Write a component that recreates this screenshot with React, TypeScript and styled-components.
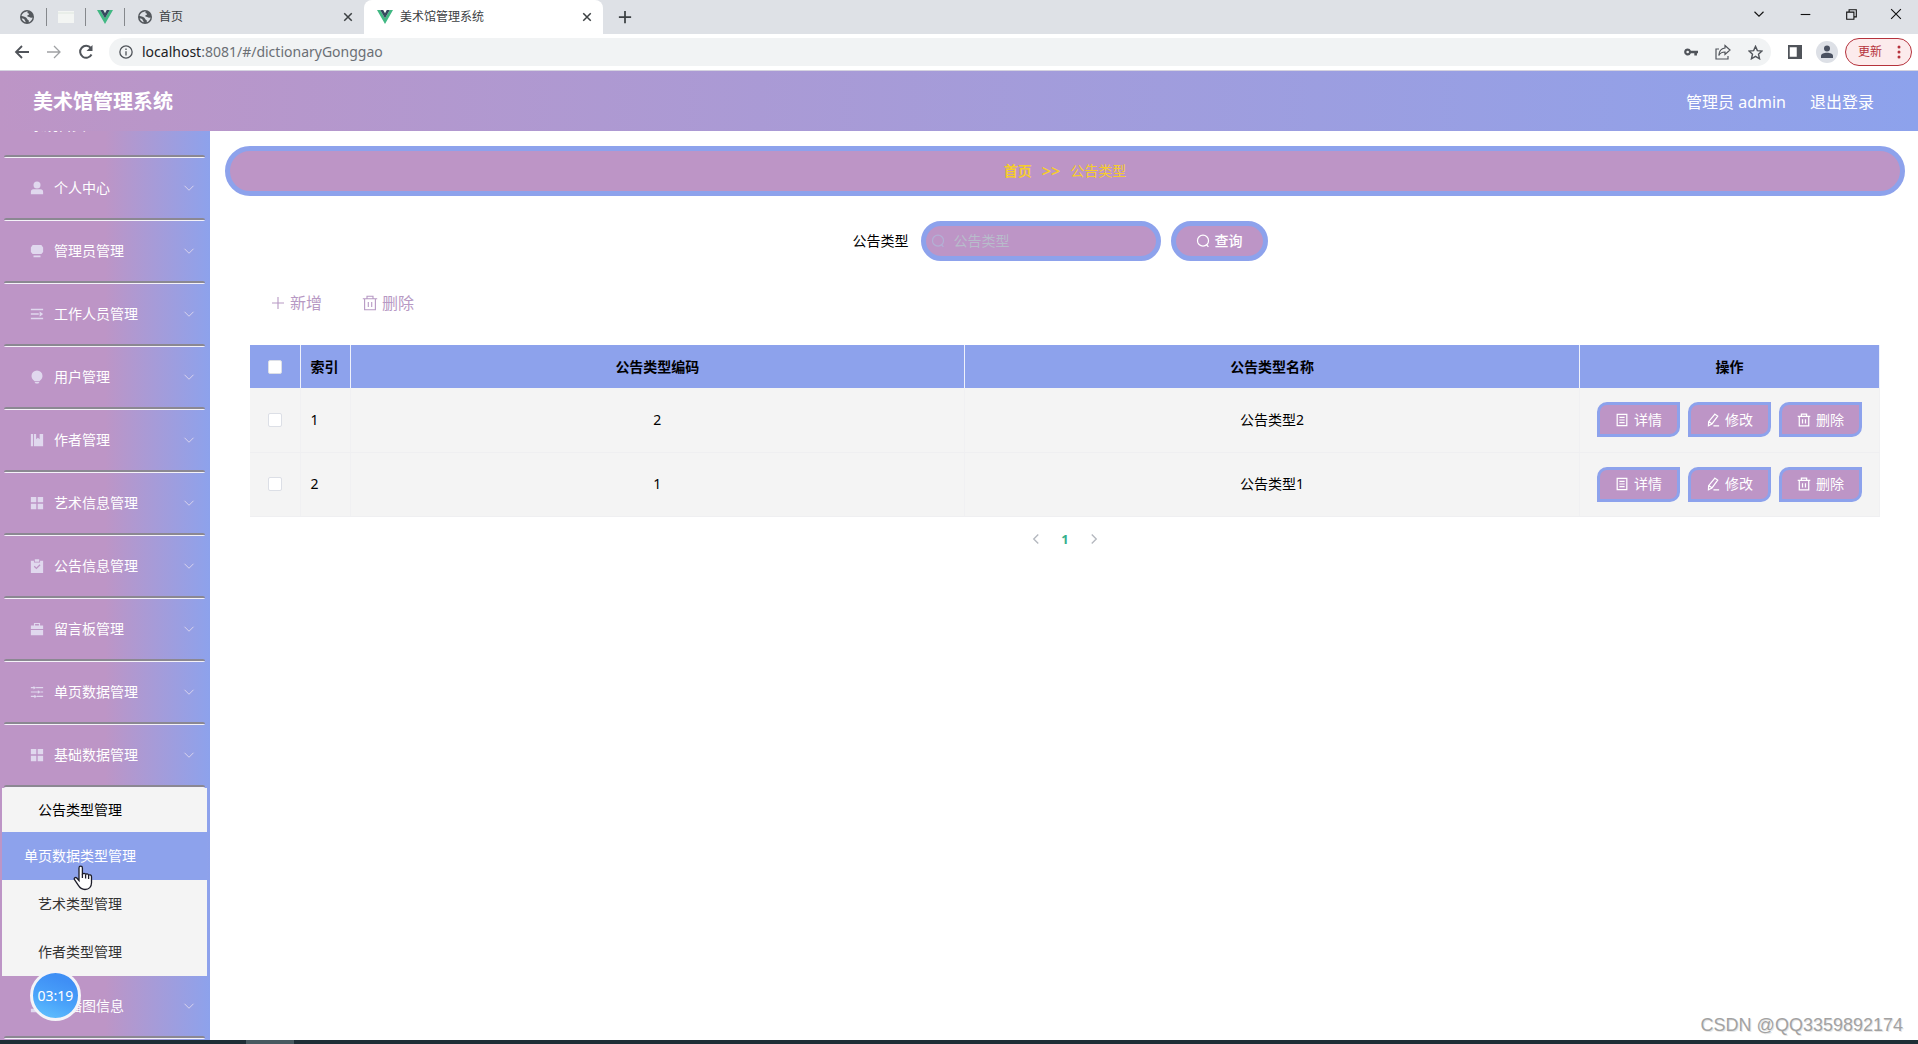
import React from 'react';
import styled, { createGlobalStyle, css } from 'styled-components';

const pink = '#bd95c6';
const blue = '#8da2ec';

const GlobalStyle = createGlobalStyle`
  * { box-sizing: border-box; }
  body {
    margin: 0;
    color: #000;
    background: #fff;
    font: 14px/20px "Noto Sans", "Noto Sans CJK SC", sans-serif;
  }
  button, input { font: inherit; }
  button { padding: 0; border: 0; background: none; color: inherit; cursor: pointer; }
  a { color: inherit; text-decoration: none; }
  svg { display: block; flex: none; }
`;

const Screen = styled.div`
  display: flex;
  flex-direction: column;
  height: 100vh;
  overflow: hidden;
`;

/* ---------- browser chrome ---------- */

const TabStrip = styled.div`
  display: flex;
  align-items: stretch;
  height: 34px;
  flex: none;
  background: #dee1e6;
  color: #3c4043;
  font-size: 12px;
`;

const PinnedTab = styled.button`
  width: 39px;
  margin: 8px 0;
  display: flex;
  align-items: center;
  justify-content: center;
  border-right: 1px solid #85888c;
  &:first-child { width: 47px; padding-left: 8px; }
`;

const Tab = styled.div<{ $active?: boolean }>`
  display: flex;
  align-items: center;
  gap: 7px;
  width: 239px;
  padding: 0 10px 0 13px;
  border-radius: 8px 8px 0 0;
  background: ${p => (p.$active ? '#fff' : 'transparent')};
`;

const TabTitle = styled.span`
  flex: 1;
  white-space: nowrap;
`;

const IconButton = styled.button<{ $width?: number }>`
  display: flex;
  align-items: center;
  justify-content: center;
  width: ${p => p.$width ?? 32}px;
`;

const WindowButtons = styled.div`
  display: flex;
  margin-left: auto;
  padding-bottom: 6px;
  color: #111;
`;

const Toolbar = styled.div`
  display: flex;
  align-items: center;
  height: 37px;
  flex: none;
  padding: 0 6px;
  border-bottom: 1px solid #d5d3e0;
  background: #fff;
  color: #50545a;
`;

const Omnibox = styled.div`
  display: flex;
  align-items: center;
  flex: 1;
  height: 28px;
  margin: 0 8px 0 7px;
  padding-left: 10px;
  border-radius: 14px;
  background: #f1f3f4;
`;

const Url = styled.div`
  flex: 1;
  margin-left: 9px;
  color: #6b6f74;
  white-space: nowrap;
  b { font-weight: 400; color: #202124; }
`;

const UpdateButton = styled.button`
  display: flex;
  align-items: center;
  justify-content: space-between;
  width: 67px;
  height: 28px;
  margin-left: 2px;
  padding: 0 10px 0 12px;
  border: 1px solid #b5323c;
  border-radius: 14px;
  background: #fcebec;
  color: #b5323c;
  font-size: 12px;
`;

/* ---------- application ---------- */

const Header = styled.header`
  display: flex;
  align-items: center;
  height: 60px;
  flex: none;
  padding: 2px 44px 0 33px;
  background: linear-gradient(90deg, ${pink}, ${blue});
  color: #fff;
  font-size: 16px;
`;

const Brand = styled.h1`
  flex: 1;
  margin: 0;
  font-size: 20px;
  font-weight: 700;
`;

const HeaderLink = styled.a`
  margin-left: 24px;
`;

const Body = styled.div`
  display: flex;
  flex: 1;
  min-height: 0;
`;

const Sidebar = styled.nav`
  display: flex;
  flex-direction: column;
  justify-content: flex-end;
  width: 210px;
  flex: none;
  padding: 0 3px 1px 2px;
  overflow: hidden;
  background: linear-gradient(90deg, ${pink} 50%, ${blue});
`;

const MenuItem = styled.button`
  display: flex;
  align-items: center;
  gap: 10px;
  height: 60px;
  flex: none;
  padding: 0 12px 0 28px;
  color: #fff;
  text-align: left;
  span { flex: 1; }
  svg { color: #e0d8ee; }
`;

const Divider = styled.div`
  height: 3px;
  flex: none;
  margin: 0 2px;
  border-radius: 3px / 2px;
  background: linear-gradient(#8b8892 2px, #f4f2f8 2px);
`;

const SubMenu = styled.div`
  display: flex;
  flex-direction: column;
  flex: none;
  background: #f4f4f4;
`;

const SubLink = styled.a<{ $state?: 'current' | 'hover' }>`
  display: flex;
  align-items: center;
  height: 48px;
  padding-left: 36px;
  color: #333;
  ${p => p.$state === 'current' && css`height: 44px; color: #000;`}
  ${p => p.$state === 'hover' && css`padding-left: 22px; background: ${blue}; color: #fff;`}
`;

const Main = styled.main`
  flex: 1;
  min-width: 0;
  padding: 15px 13px 15px 15px;
`;

const Breadcrumb = styled.nav`
  display: flex;
  align-items: center;
  justify-content: center;
  gap: 10px;
  height: 50px;
  border: 5px solid ${blue};
  border-radius: 25px;
  background: ${pink};
  color: #f5cd2c;
  a { font-weight: 700; }
`;

const Separator = styled.span`
  font-size: 16px;
  font-weight: 600;
`;

const Content = styled.section`
  padding: 25px;
`;

const SearchForm = styled.form`
  display: flex;
  align-items: center;
  justify-content: center;
  padding-right: 10px;
  label { margin-right: 12px; }
`;

const SearchBox = styled.div`
  display: flex;
  align-items: center;
  gap: 9px;
  width: 240px;
  height: 40px;
  padding: 0 5px;
  border: 5px solid ${blue};
  border-radius: 20px;
  background: ${pink};
  color: #b3b0d4;
  input {
    flex: 1;
    min-width: 0;
    padding: 0;
    border: 0;
    outline: 0;
    background: none;
    color: #fff;
  }
  input::placeholder { color: #b8bccb; opacity: 1; }
`;

const SearchButton = styled.button`
  display: flex;
  align-items: center;
  justify-content: center;
  gap: 5px;
  width: 97px;
  height: 40px;
  margin-left: 10px;
  border: 5px solid ${blue};
  border-radius: 20px;
  background: ${pink};
  color: #fff;
  font-weight: 500;
`;

const Actions = styled.div`
  display: flex;
  gap: 40px;
  padding: 30px 20px;
`;

const TextButton = styled.button`
  display: flex;
  align-items: center;
  gap: 4px;
  height: 24px;
  color: #b799c4;
  font-size: 16px;
`;

const Table = styled.table`
  width: 100%;
  table-layout: fixed;
  border-collapse: collapse;
  th, td { padding: 0; text-align: center; }
  th {
    height: 43px;
    border-right: 1px solid #eef1fb;
    background: ${blue};
    font-weight: 700;
  }
  td {
    height: 64px;
    border-right: 1px solid #f0f0f2;
    border-bottom: 1px solid #efeff1;
    background: #f4f4f4;
  }
  th:nth-child(2), td:nth-child(2) { padding-left: 10px; text-align: left; }
`;

const Col = styled.col<{ $width?: number }>`
  width: ${p => (p.$width ? `${p.$width}px` : 'auto')};
`;

const CheckBox = styled.input`
  appearance: none;
  display: block;
  width: 14px;
  height: 14px;
  margin: 0 auto;
  border: 1px solid #dcdfe6;
  border-radius: 2px;
  background: #fff;
`;

const RowActions = styled.div`
  display: flex;
  justify-content: center;
  gap: 8px;
`;

const RowButton = styled.button`
  display: flex;
  align-items: center;
  justify-content: center;
  gap: 5px;
  width: 83px;
  height: 35px;
  border: 3px solid ${blue};
  border-radius: 10px 0;
  background: ${pink};
  color: #fff;
`;

const Pagination = styled.nav`
  display: flex;
  justify-content: center;
  align-items: center;
  padding-top: 8px;
`;

const PageButton = styled.button<{ $current?: boolean }>`
  display: flex;
  align-items: center;
  justify-content: center;
  width: 29px;
  height: 28px;
  font-size: 13px;
  font-weight: 700;
  color: ${p => (p.$current ? '#35b08c' : '#b4b8bf')};
`;

/* ---------- overlays ---------- */

const Recorder = styled.div`
  position: absolute;
  left: 30px;
  bottom: 23px;
  display: flex;
  align-items: center;
  justify-content: center;
  width: 51px;
  height: 51px;
  border: 3px solid #f4f4f8;
  border-radius: 50%;
  background: linear-gradient(200deg, #3f8ff5 20%, #4aa3fa 60%, #62c4fd);
  color: #fff;
`;

const Cursor = styled.svg`
  position: absolute;
  left: 73px;
  top: 865px;
`;

const Watermark = styled.div`
  position: absolute;
  right: 15px;
  bottom: 8px;
  color: #a2a2a2;
  font: 18px/22px "Liberation Sans", Arial, sans-serif;
  text-shadow: 1px 1px 0 #e6e6e6;
`;

const Taskbar = styled.div`
  display: flex;
  height: 4px;
  flex: none;
  padding-left: 246px;
  background: #1e2d35;
`;

const TaskbarItem = styled.div`
  width: 48px;
  background: #485960;
`;

/* ---------- icons ---------- */

type IconProps = { size?: number; children: React.ReactNode; w?: number };

const Line = ({ size = 14, w = 1.2, children }: IconProps) => (
  <svg width={size} height={size} viewBox="0 0 16 16" fill="none" stroke="currentColor" strokeWidth={w} aria-hidden="true">
    {children}
  </svg>
);

const Solid = ({ size = 14, children }: IconProps) => (
  <svg width={size} height={size} viewBox="0 0 16 16" fill="currentColor" aria-hidden="true">
    {children}
  </svg>
);

const VueLogo = () => (
  <svg width="16" height="14" viewBox="0 0 16 14" aria-hidden="true">
    <path d="M0 0h3.2L8 8.3 12.8 0H16L8 14z" fill="#41b883" />
    <path d="M3.2 0h3L8 3.2 9.8 0h3L8 8.3z" fill="#35495e" />
  </svg>
);

const Globe = () => (
  <svg width="14" height="14" viewBox="0 0 16 16" aria-hidden="true">
    <circle cx="8" cy="8" r="8" fill="#54585d" />
    <path d="M9 1.6c-1 1-.5 2 .8 2.3 1 .2.6 1.6-.6 1.9-1.5.4-1 1.7.3 2 1.5.2 2 1.3 3.4 1.1l1.5-.3c-.3 2.3-1.9 4.6-4.2 5.5l-.3-2.5c-1.9-.5-1.6-2.2-3-3.1C5.5 7.6 3.600 7.300 1.700 6.600 2.400 4 5.500 1.400 9 1.600z" fill="#dee1e6" />
    <path d="M2 9.500l2.800.8c.2 1.500 1.500 1.600 1.700 3.700C4.200 13.500 2.500 11.800 2 9.500z" fill="#dee1e6" />
  </svg>
);

const Close = () => <Line size={12} w={2}><path d="M3 3l10 10M13 3L3 13" /></Line>;
const ChevronDown = () => <Line size={12}><path d="M2 5l6 6 6-6" /></Line>;
const SearchIcon = () => <Line w={1.4}><circle cx="8" cy="7.6" r="6.3" /><path d="M11.800 12l2.400 2.800" /></Line>;
const Trash = ({ size, tall }: { size?: number; tall?: boolean }) => (
  <Line size={size} w={tall ? 1.1 : 1.4}>
    <path d="M.8 3.800h14.400M5 3.500V1.300h6v2.200M2.600 4v10.800h10.800V4M6.300 7v5M9.700 7v5" />
  </Line>
);
const Plus = () => <Line size={16} w={1.1}><path d="M8 2v12M2 8h12" /></Line>;
const DocIcon = () => <Line w={1.4}><path d="M2.500 1.500h11v13h-11zM5 5h6M5 8h6M5 11h6" /></Line>;
const EditIcon = () => (
  <Line w={1.4}><path d="M10.200 1.300l3.200 2.200-6.600 9-4 2 .2-4.600zM3.500 10l3.200 2.300M8.500 14.700h6.500" /></Line>
);

const GridIcon = () => (
  <Solid><path d="M1 1h6.200v6.200H1zM8.800 1H15v6.200H8.800zM1 8.800h6.200V15H1zM8.800 8.800H15V15H8.800z" /></Solid>
);

const menu: { label: string; icon?: React.ReactNode }[] = [
  { label: '个人中心', icon: <Solid><circle cx="8" cy="4.500" r="4" /><path d="M1 15v-2.500a3 3 0 013-3h8a3 3 0 013 3V15z" /></Solid> },
  { label: '管理员管理', icon: <Solid><path d="M3 1h10l2 3v5l-2 2.500H3L1 9V4zM4 13h8v2H4z" /></Solid> },
  { label: '工作人员管理', icon: <Solid><path d="M1 2h14v1.800H1zM1 7.100h9v1.800H1zM11 5l4 3-4 3zM1 12.200h14V14H1z" /></Solid> },
  { label: '用户管理', icon: <Solid><path d="M8 .5a6.300 6.300 0 016.300 6.300c0 2.600-1.700 4.400-3.300 5.700H5C3.400 11.200 1.700 9.400 1.700 6.800A6.300 6.300 0 018 .5zM5 13.500h6L9.500 15.500h-3z" /></Solid> },
  { label: '作者管理', icon: <Solid><path d="M1 1h2.500v14H1zM4.500 1H7v6l2-1.700L11 7V1h4v14H4.500z" /></Solid> },
  { label: '艺术信息管理', icon: <GridIcon /> },
  { label: '公告信息管理', icon: <Solid><path fillRule="evenodd" d="M1 2h3.500v2h7V2H15v14H1zM5.500.3h5V3h-5zM4.300 8.800l3 3 4.700-4.700-1-1-3.700 3.700-2-2z" /></Solid> },
  { label: '留言板管理', icon: <Solid><path d="M4.500 4V1h7v3H15v4H1V4zm1.300 0h4.400V2.300H5.800zM1 9h14v6H1z" fillRule="evenodd" /></Solid> },
  { label: '单页数据管理', icon: <Solid><path d="M1 2.300h3V1l3 2-3 2V3.700H1zM7 2.300h8v1.400H7zM1 7.300h8V6l3 2-3 2V8.700H1zM12 7.300h3v1.400h-3zM1 12.300h4V11l3 2-3 2v-1.300H1zM8 12.300h7v1.400H8z" /></Solid> },
  { label: '基础数据管理', icon: <GridIcon /> },
];

const rows = [
  { index: 1, code: '2', name: '公告类型2' },
  { index: 2, code: '1', name: '公告类型1' },
];

const MenuEntry = ({ label, icon }: { label: string; icon?: React.ReactNode }) => (
  <>
    <MenuItem type="button">
      {icon}
      <span>{label}</span>
      {icon && <ChevronDown />}
    </MenuItem>
    <Divider />
  </>
);

export default function App() {
  return (
    <Screen>
      <GlobalStyle />
      <TabStrip>
        <PinnedTab aria-label="标签页 1"><Globe /></PinnedTab>
        <PinnedTab aria-label="标签页 2">
          <svg width="16" height="12" viewBox="0 0 16 12"><path d="M0 0h16v12H0z" fill="#f3f5f3" /><path d="M0 2h16" stroke="#dfe7df" /></svg>
        </PinnedTab>
        <PinnedTab aria-label="标签页 3"><VueLogo /></PinnedTab>
        <Tab>
          <Globe />
          <TabTitle>首页</TabTitle>
          <IconButton $width={12} aria-label="关闭首页"><Close /></IconButton>
        </Tab>
        <Tab $active>
          <VueLogo />
          <TabTitle>美术馆管理系统</TabTitle>
          <IconButton $width={12} aria-label="关闭当前标签页"><Close /></IconButton>
        </Tab>
        <IconButton $width={44} aria-label="新标签页"><Line size={14} w={2}><path d="M8 1v14M1 8h14" /></Line></IconButton>
        <WindowButtons>
          <IconButton $width={46} aria-label="搜索标签页"><Line size={12} w={1.5}><path d="M2 5l6 6 6-6" /></Line></IconButton>
          <IconButton $width={46} aria-label="最小化"><Line size={11} w={1.6}><path d="M1 8h14" /></Line></IconButton>
          <IconButton $width={46} aria-label="还原"><Line size={11} w={1.6}><path d="M1 4.500h10.500V15H1zM4.500 4V1H15v10.500h-3" /></Line></IconButton>
          <IconButton $width={44} aria-label="关闭窗口"><Line size={12} w={1.5}><path d="M1.500 1.500l13 13M14.500 1.500l-13 13" /></Line></IconButton>
        </WindowButtons>
      </TabStrip>
      <Toolbar>
        <IconButton aria-label="后退"><Line size={16} w={1.8}><path d="M15 8H2M8 2L2 8l6 6" /></Line></IconButton>
        <IconButton aria-label="前进"><Line size={16} w={1.3}><g opacity=".55"><path d="M1 8h13M8 2l6 6-6 6" /></g></Line></IconButton>
        <IconButton aria-label="刷新"><Line size={16} w={2}><path d="M13.500 10.500A6 6 0 1112.800 4" /><path d="M14.500 1v6h-6z" fill="currentColor" stroke="none" /></Line></IconButton>
        <Omnibox>
          <Line size={14} w={1.5}><circle cx="8" cy="8" r="7" /><path d="M8 7v5M8 4v1.600" /></Line>
          <Url><b>localhost</b>:8081/#/dictionaryGonggao</Url>
          <IconButton aria-label="密码">
            <Solid><path fillRule="evenodd" d="M4.200 4a4 4 0 013.700 2.500H16v3h-1.200V12h-3V9.500H7.900A4 4 0 114.200 4zm0 2.500a1.500 1.500 0 100 3 1.500 1.500 0 000-3z" /></Solid>
          </IconButton>
          <IconButton aria-label="分享">
            <Line size={16}><path d="M4 5H1v10h12v-3M10 1.500L15 6l-5 4.500V8C7 8 5 9 3.800 11.500 4 7.500 6.500 4.500 10 4z" /></Line>
          </IconButton>
          <IconButton aria-label="收藏">
            <Line size={15} w={1.5}><path d="M8 1.500l2 4.500 4.900.5-3.700 3.300 1.100 4.900L8 12.200l-4.300 2.500 1.100-4.900L1.100 6.500 6 6z" /></Line>
          </IconButton>
        </Omnibox>
        <IconButton aria-label="侧边栏"><Solid><path fillRule="evenodd" d="M0 0h16v16H0zM2 2.500v11h8v-11z" /></Solid></IconButton>
        <IconButton aria-label="个人资料">
          <svg width="22" height="22" viewBox="0 0 22 22"><circle cx="11" cy="11" r="11" fill="#dde0e6" /><circle cx="11" cy="7.500" r="3" fill="#4a5160" /><path d="M5 17v-2c0-2 3-3.200 6-3.200s6 1.200 6 3.200v2z" fill="#4a5160" /></svg>
        </IconButton>
        <UpdateButton>
          更新
          <svg width="4" height="14" viewBox="0 0 4 14" fill="currentColor"><circle cx="2" cy="2" r="1.500" /><circle cx="2" cy="7" r="1.500" /><circle cx="2" cy="12" r="1.500" /></svg>
        </UpdateButton>
      </Toolbar>
      <Header>
        <Brand>美术馆管理系统</Brand>
        <span>管理员 admin</span>
        <HeaderLink href="#logout">退出登录</HeaderLink>
      </Header>
      <Body>
        <Sidebar>
          <MenuEntry label="系统首页" />
          {menu.map(m => <MenuEntry key={m.label} {...m} />)}
          <SubMenu>
            <SubLink href="#gonggao" $state="current">公告类型管理</SubLink>
            <SubLink href="#danye" $state="hover">单页数据类型管理</SubLink>
            <SubLink href="#yishu">艺术类型管理</SubLink>
            <SubLink href="#zuozhe">作者类型管理</SubLink>
          </SubMenu>
          <MenuEntry label="轮播图信息" icon={<Solid><path d="M3 1h10v8H3zM1 11h14v4H1z" /></Solid>} />
        </Sidebar>
        <Main>
          <Breadcrumb>
            <a href="#home">首页</a>
            <Separator>&gt;&gt;</Separator>
            <span>公告类型</span>
          </Breadcrumb>
          <Content>
            <SearchForm onSubmit={e => e.preventDefault()}>
              <label htmlFor="type">公告类型</label>
              <SearchBox>
                <SearchIcon />
                <input id="type" placeholder="公告类型" />
              </SearchBox>
              <SearchButton type="submit"><SearchIcon />查询</SearchButton>
            </SearchForm>
            <Actions>
              <TextButton type="button"><Plus />新增</TextButton>
              <TextButton type="button"><Trash size={16} tall />删除</TextButton>
            </Actions>
            <Table>
              <colgroup>
                <Col $width={50} /><Col $width={50} /><Col /><Col /><Col $width={300} />
              </colgroup>
              <thead>
                <tr>
                  <th><CheckBox type="checkbox" aria-label="全选" /></th>
                  <th>索引</th>
                  <th>公告类型编码</th>
                  <th>公告类型名称</th>
                  <th>操作</th>
                </tr>
              </thead>
              <tbody>
                {rows.map(r => (
                  <tr key={r.index}>
                    <td><CheckBox type="checkbox" aria-label={`选择第${r.index}行`} /></td>
                    <td>{r.index}</td>
                    <td>{r.code}</td>
                    <td>{r.name}</td>
                    <td>
                      <RowActions>
                        <RowButton type="button"><DocIcon />详情</RowButton>
                        <RowButton type="button"><EditIcon />修改</RowButton>
                        <RowButton type="button"><Trash />删除</RowButton>
                      </RowActions>
                    </td>
                  </tr>
                ))}
              </tbody>
            </Table>
            <Pagination>
              <PageButton aria-label="上一页"><Line size={12} w={1.8}><path d="M11 2L5 8l6 6" /></Line></PageButton>
              <PageButton $current>1</PageButton>
              <PageButton aria-label="下一页"><Line size={12} w={1.8}><path d="M5 2l6 6-6 6" /></Line></PageButton>
            </Pagination>
          </Content>
        </Main>
      </Body>
      <Taskbar><TaskbarItem /></Taskbar>
      <Watermark>CSDN @QQ3359892174</Watermark>
      <Recorder>03:19</Recorder>
      <Cursor width="20" height="26" viewBox="0 0 20 26" fill="#fff" stroke="#1c1c28" strokeWidth="1.3" aria-hidden="true">
        <path d="M6 15.500V3c0-2.400 3.400-2.400 3.400 0v6.500c.4-1.700 3-1.500 3.200.2.500-1.300 2.900-1 3 .7.700-1 2.900-.7 2.900 1.300v6c0 4-2.500 6.800-6.500 6.800-3.700 0-5.200-1.700-6.800-4.300L1.500 14.700c-.9-1.600 1-2.900 2.300-1.700z" />
        <path d="M9.400 9v4M12.600 10v3.500M15.600 11v3" />
      </Cursor>
    </Screen>
  );
}
